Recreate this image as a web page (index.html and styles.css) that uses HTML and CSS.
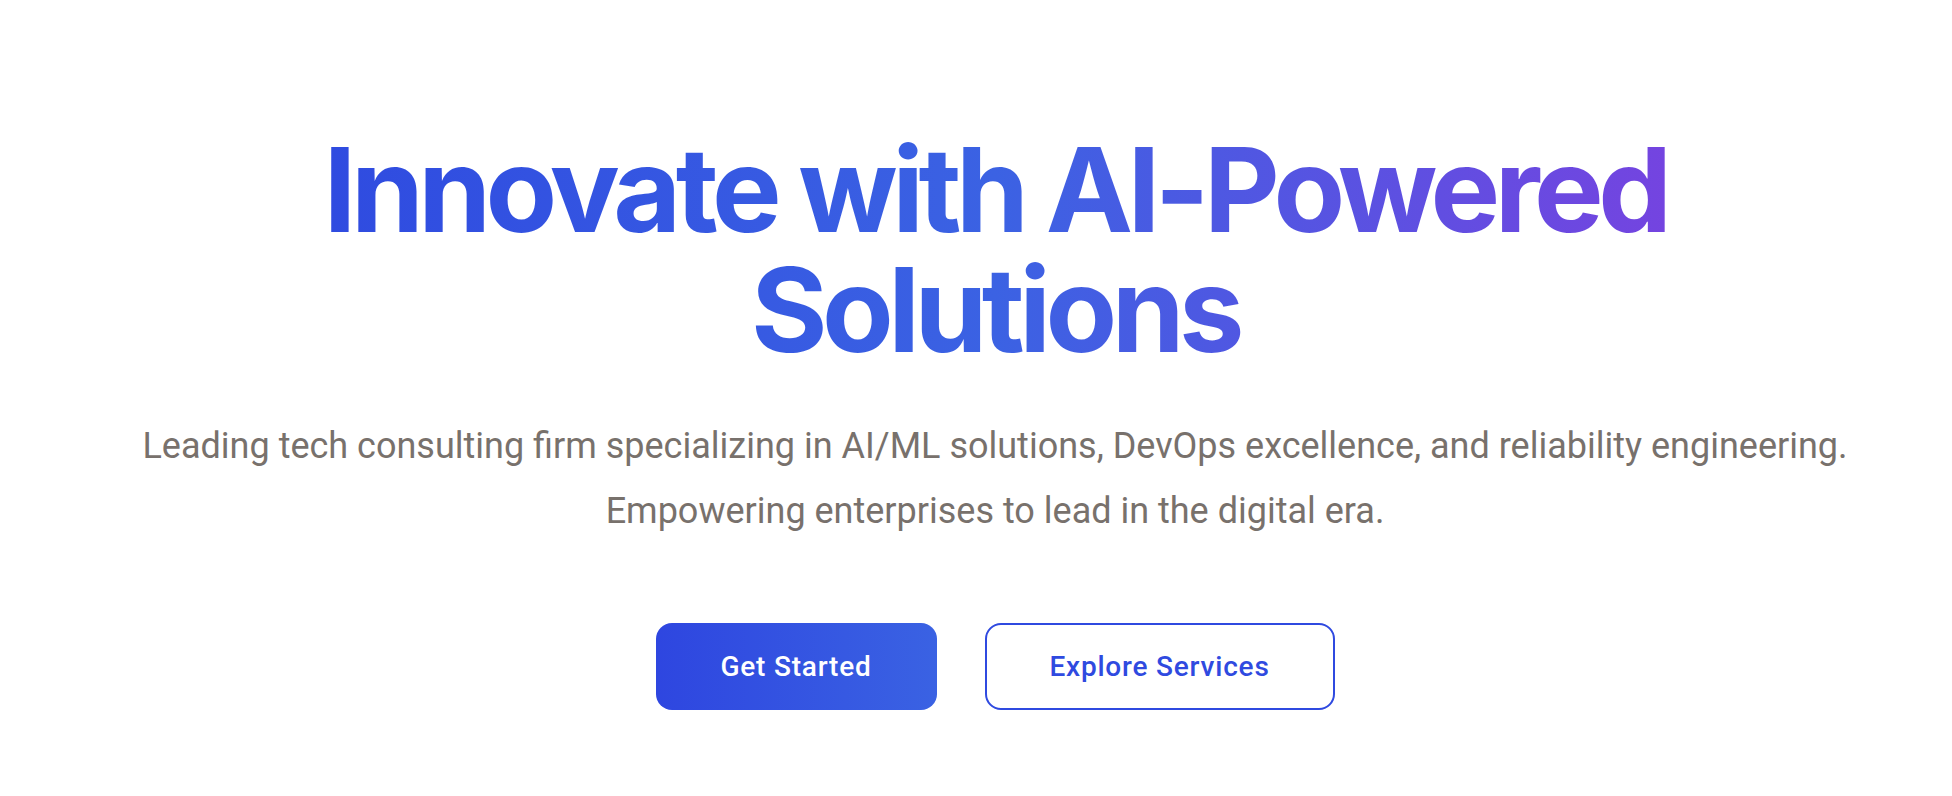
FILE: index.html
```html
<!DOCTYPE html>
<html lang="en">
<head>
<meta charset="utf-8">
<title>Innovate with AI-Powered Solutions</title>
<link rel="stylesheet" href="styles.css">
</head>
<body>
<section class="hero">
  <h1 class="hero-title">Innovate with AI-Powered<br>Solutions</h1>
  <p class="hero-text">Leading tech consulting firm specializing in AI/ML solutions, DevOps excellence, and reliability engineering. Empowering enterprises to lead in the digital era.</p>
  <div class="hero-actions">
    <a class="btn btn-primary" href="#">Get Started</a>
    <a class="btn btn-outline" href="#">Explore Services</a>
  </div>
</section>
</body>
</html>
```
FILE: styles.css
```css
* { box-sizing: border-box; }
html, body { margin: 0; padding: 0; background: #ffffff; }
body {
  font-family: Roboto, "Liberation Sans", sans-serif;
  -webkit-font-smoothing: antialiased;
}
.hero {
  display: flex;
  flex-direction: column;
  align-items: center;
  text-align: center;
  padding: 130px 0 0 38px;
  min-height: 796px;
}
.hero-title {
  margin: 0;
  width: fit-content;
  font-family: Inter, "Noto Sans", sans-serif;
  font-size: 117px;
  line-height: 120px;
  font-weight: 700;
  letter-spacing: -0.047em;
  background: linear-gradient(90deg, #2f4be0 0%, #3b62e3 50%, #7444e0 100%);
  -webkit-background-clip: text;
  background-clip: text;
  color: transparent;
}
.hero-text {
  margin: 44px 0 0;
  max-width: 1760px;
  font-size: 36px;
  line-height: 64.8px;
  color: #78716c;
  font-weight: 400;
}
.hero-actions {
  display: flex;
  gap: 48px;
  margin-top: 79px;
}
.btn {
  display: inline-flex;
  align-items: center;
  justify-content: center;
  height: 87px;
  padding: 0;
  border-radius: 16px;
  font-size: 28px;
  font-weight: 500;
  letter-spacing: 0.8px;
  text-decoration: none;
}
.btn-primary {
  width: 281px;
  color: #ffffff;
  background: linear-gradient(90deg, #2e46e0 0%, #3a62e3 100%);
}
.btn-outline {
  width: 350px;
  color: #2f4ae0;
  border: 2px solid #2f4ae0;
  background: #ffffff;
}
```
